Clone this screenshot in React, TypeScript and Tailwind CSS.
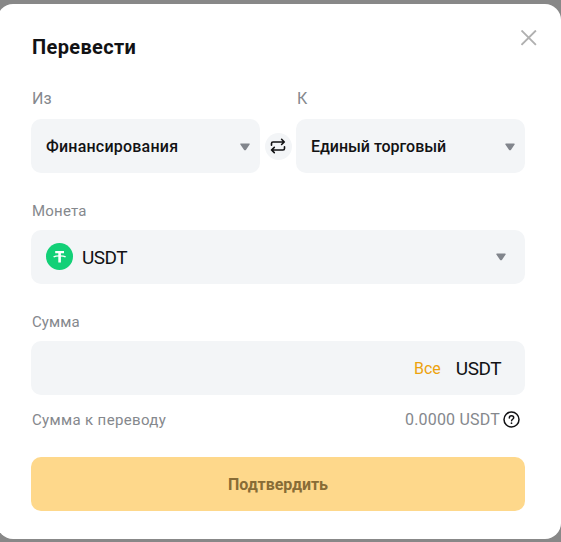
import React from 'react';

function Caret() {
  return (
    <svg width="10" height="8" viewBox="0 0 10 8" className="shrink-0" fill="#81858c">
      <path d="M1 .5h8c.7 0 1 .6.6 1.100L5.900 6.900c-.5.600-1.300.600-1.800 0L.4 1.600C0 1.100.3.500 1 .500Z" />
    </svg>
  );
}

function Select({ text, className }: { text: string; className: string }) {
  return (
    <button className="flex h-[54px] w-[229px] items-center justify-between rounded-[10px] bg-[#f3f5f7] pt-0.5 pr-[10px] pl-[15px] text-base font-medium text-[#121214]">
      <span className={className}>{text}</span>
      <Caret />
    </button>
  );
}

function SwapIcon() {
  return (
    <svg width="16" height="16" viewBox="0 0 16 16" fill="none" stroke="#121214" strokeWidth="1.600" strokeLinecap="round" strokeLinejoin="round">
      <path d="M1.500 7.200V5.500Q1.500 4 3 4H14.300M11.600 1.300 14.300 4 11.600 6.500" />
      <path d="M14.500 8.700V10.500Q14.500 12 13 12H1.500M4.300 9.400 1.500 12 4.300 14.700" />
    </svg>
  );
}

function TetherIcon() {
  return (
    <svg width="27" height="27" viewBox="0 0 27 27">
      <circle cx="13.500" cy="13.500" r="13.500" fill="#13d077" />
      <path d="M9.200 8h8.800v2.200h-3.100v9.300h-2.600v-9.300H9.200Z" fill="#fff" />
      <path d="M7.600 13.900C9 13.100 11.200 12.900 13.600 12.900s4.600.2 6 1" fill="none" stroke="#fff" strokeWidth="1.400" />
    </svg>
  );
}

function HelpIcon() {
  return (
    <svg width="17" height="17" viewBox="0 0 17 17" fill="none" stroke="#121214" strokeWidth="1.500" strokeLinecap="round">
      <circle cx="8.500" cy="8.500" r="7.500" />
      <path d="M6.300 6.900c0-1.400 1-2.200 2.200-2.200s2.200.8 2.200 2c0 1.500-2.100 1.600-2.100 3" />
      <path d="M8.500 12.100v.1" strokeWidth="1.700" />
    </svg>
  );
}

export default function App() {
  return (
    <div className="h-[542px] w-[561px] overflow-hidden bg-[#888888] pt-1 font-['Roboto','Noto_Sans',sans-serif]">
      <main className="-ml-[3px] h-[535px] w-[564px] rounded-[16px] bg-white pr-9 pl-[34px]">
        <header className="-mr-3 flex h-[81px] justify-between">
          <h1 className="pt-[29px] pl-px text-[20px] leading-[28px] font-bold tracking-[0.35px] text-[#121214]">Перевести</h1>
          <button aria-label="Закрыть" className="mt-[26px] h-4 w-4">
            <svg width="16" height="16" viewBox="0 0 16 16" stroke="#b0b0b0" strokeWidth="1.900">
              <path d="m.5.5 14.400 14.400M14.900.5.500 14.900" />
            </svg>
          </button>
        </header>
        <div className="flex h-[34px] text-base leading-[28px] text-[#85888d]">
          <span className="w-[265px] pl-px">Из</span>
          <span className="pl-px">К</span>
        </div>
        <div className="flex items-center justify-between">
          <Select text="Финансирования" className="tracking-[0.22px]" />
          <button className="flex h-[27px] w-[27px] items-center justify-center rounded-full bg-[#f3f5f7]"><SwapIcon /></button>
          <Select text="Единый торговый" className="tracking-[-0.03px]" />
        </div>
        <div className="mt-[23px] h-[34px] pl-px text-[15px] leading-[30px] text-[#85888d]"><span className="tracking-[0.200px]">Монета</span></div>
        <button className="flex h-[54px] w-full items-center rounded-[10px] bg-[#f3f5f7] pr-[19px] pb-px pl-[15px] text-[#121214]">
          <TetherIcon />
          <span className="ml-[9px] flex-1 pt-[3px] text-left text-[19px] tracking-[-0.5px]">USDT</span>
          <Caret />
        </button>
        <div className="mt-[23px] h-[34px] pl-px text-[15px] leading-[30px] text-[#85888d]"><span className="tracking-[0.100px]">Сумма</span></div>
        <div className="flex h-[54px] items-center justify-end rounded-[10px] bg-[#f3f5f7] pt-0.5 pr-6">
          <span className="mr-[15px] text-base text-[#eda20c]">Все</span>
          <span className="text-[19px] tracking-[-0.5px] text-[#121214]">USDT</span>
        </div>
        <div className="mt-[10px] flex h-[28px] items-center text-base text-[#85888d]">
          <span className="flex-1 pt-0.5 pl-px text-[15px] tracking-[0.350px]">Сумма к переводу</span>
          <span className="mr-[3px] pt-0.5 tracking-[0.200px]">0.0000 USDT</span>
          <span className="mr-[5px]"><HelpIcon /></span>
        </div>
        <button className="mt-6 h-[54px] w-full rounded-[10px] bg-[#fed88b] pt-0.5 text-base font-bold tracking-[-0.05px] text-[#886c36]">Подтвердить</button>
      </main>
    </div>
  );
}
